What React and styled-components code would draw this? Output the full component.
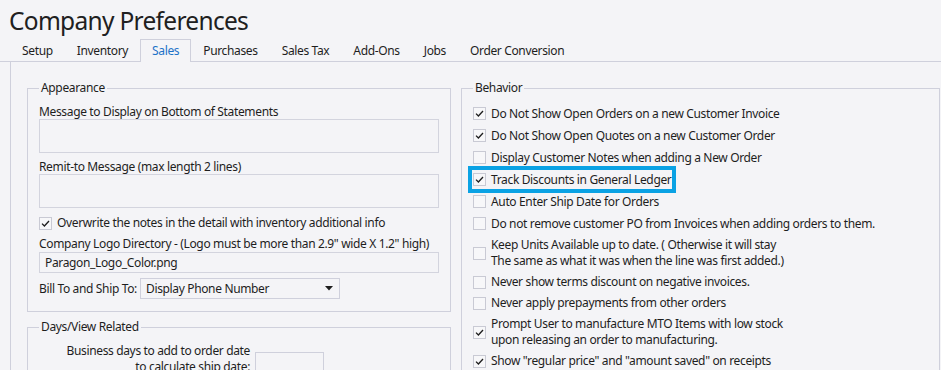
import React from "react";
import styled, { createGlobalStyle } from "styled-components";

const GlobalStyle = createGlobalStyle`
  html, body {
    margin: 0;
    padding: 0;
    background: #f4f4f7;
    overflow: hidden;
  }
  body {
    font-family: "Noto Sans", "Open Sans", sans-serif;
    font-size: 12px;
    letter-spacing: -0.35px;
    color: #1e1e1e;
  }
`;

const tabs = ["Setup", "Inventory", "Sales", "Purchases", "Sales Tax", "Add-Ons", "Jobs", "Order Conversion"];

const behavior = [
  { label: "Do Not Show Open Orders on a new Customer Invoice", checked: true, tall: true },
  { label: "Do Not Show Open Quotes on a new Customer Order", checked: true, tall: true },
  { label: "Display Customer Notes when adding a New Order", checked: false, tall: true },
  { label: "Track Discounts in General Ledger", checked: true, tall: true, marked: true },
  { label: "Auto Enter Ship Date for Orders", checked: false, tall: true },
  { label: "Do not remove customer PO from Invoices when adding orders to them.", checked: false, tall: true },
  { label: ["Keep Units Available up to date. ( Otherwise it will stay", "The same as what it was when the line was first added.)"], checked: false },
  { label: "Never show terms discount on negative invoices.", checked: false },
  { label: "Never apply prepayments from other orders", checked: false },
  { label: ["Prompt User to manufacture MTO Items with low stock", "upon releasing an order to manufacturing."], checked: true },
  { label: "Show \"regular price\" and \"amount saved\" on receipts", checked: true },
];

const Check = ({ checked }) => (
  <Box>
    {checked && (
      <svg width="13" height="13" viewBox="0 0 13 13">
        <polyline points="3,6.6 5.4,9 10,4" fill="none" stroke="#1e1e1e" strokeWidth="1.3" />
      </svg>
    )}
  </Box>
);

const App = () => {
  return (
    <Page>
      <GlobalStyle />
      <Title>Company Preferences</Title>
      <TabStrip>
        {tabs.map((t) => (
          <Tab key={t} $active={t === "Sales"}>
            {t}
          </Tab>
        ))}
      </TabStrip>
      <Panel>
        <LeftCol>
          <Group>
            <Legend>Appearance</Legend>
            <Label $top={9}>Message to Display on Bottom of Statements</Label>
            <TextBox $h={34} />
            <Label $top={7}>Remit-to Message (max length 2 lines)</Label>
            <TextBox $h={34} />
            <CheckRow $top={7}>
              <Check checked />
              <span>Overwrite the notes in the detail with inventory additional info</span>
            </CheckRow>
            <Label $top={6}>Company Logo Directory - (Logo must be more than 2.9" wide X 1.2" high)</Label>
            <TextBox $h={21} $top={1}>Paragon_Logo_Color.png</TextBox>
            <ComboRow>
              <span>Bill To and Ship To:</span>
              <Combo>
                <span>Display Phone Number</span>
                <svg width="8" height="5" viewBox="0 0 8 5">
                  <polygon points="0,0 8,0 4,4.5" fill="#1e1e1e" />
                </svg>
              </Combo>
            </ComboRow>
          </Group>
          <Group>
            <Legend>Days/View Related</Legend>
            <DaysRow>
              <DaysLabel>
                Business days to add to order date
                <br />
                to calculate ship date:
              </DaysLabel>
              <SmallBox />
            </DaysRow>
          </Group>
        </LeftCol>
        <RightCol>
          <Group>
            <Legend>Behavior</Legend>
            <List>
              {behavior.map((b, i) => (
                <Option key={i} $tall={b.tall} $marked={b.marked}>
                  <Check checked={b.checked} />
                  <span>
                    {Array.isArray(b.label) ? (
                      <>
                        {b.label[0]}
                        <br />
                        {b.label[1]}
                      </>
                    ) : (
                      b.label
                    )}
                  </span>
                </Option>
              ))}
            </List>
          </Group>
        </RightCol>
      </Panel>
    </Page>
  );
};

const Page = styled.div`
  width: 941px;
  height: 370px;
  overflow: hidden;
`;

const Title = styled.div`
  height: 39px;
  padding-left: 9px;
  font-size: 24.5px;
  letter-spacing: -0.7px;
  line-height: 42px;
  color: #202020;
  box-sizing: border-box;
`;

const TabStrip = styled.div`
  display: flex;
  padding-left: 10px;
  height: 22px;
  border-bottom: 1px solid #cfd0dc;
`;

const Tab = styled.div`
  padding: 0 11px;
  line-height: 22px;
  box-sizing: border-box;
  border: 1px solid ${(p) => (p.$active ? "#cfd0dc" : "transparent")};
  border-bottom: none;
  background: #f4f4f7;
  height: ${(p) => (p.$active ? "23px" : "22px")};
  color: ${(p) => (p.$active ? "#1c72c8" : "#1e1e1e")};
  position: relative;
`;

const Panel = styled.div`
  display: flex;
  gap: 10px;
  margin-left: 10px;
  border-left: 1px solid #cfd0dc;
  padding: 18px 0 0 16px;
  height: 400px;
`;

const LeftCol = styled.div`
  width: 424px;
  display: flex;
  flex-direction: column;
  gap: 7px;
  flex-shrink: 0;
`;

const RightCol = styled.div`
  width: 479px;
  flex-shrink: 0;
`;

const Group = styled.fieldset`
  margin: 0;
  padding: 0 11px 12px 11px;
  border: 1px solid #cfd0dc;
  min-width: 0;
  display: flex;
  flex-direction: column;
`;

const Legend = styled.legend`
  padding: 0 2px;
  line-height: 16px;
  font-size: 12px;
`;

const Label = styled.div`
  line-height: 14px;
  margin-top: ${(p) => p.$top || 0}px;
  white-space: nowrap;
`;

const TextBox = styled.div`
  height: ${(p) => p.$h}px;
  margin-top: ${(p) => p.$top || 0}px;
  border: 1px solid #d3d4de;
  box-sizing: border-box;
  padding-left: 5px;
  line-height: 19px;
`;

const Box = styled.span`
  width: 13px;
  height: 13px;
  box-sizing: border-box;
  border: 1px solid #c9cad4;
  background: #f7f7f9;
  flex-shrink: 0;
  display: flex;
  align-items: center;
  justify-content: center;
  svg {
    margin: -1px;
  }
`;

const CheckRow = styled.div`
  display: flex;
  align-items: center;
  gap: 5px;
  line-height: 16px;
  margin-top: ${(p) => p.$top || 0}px;
  white-space: nowrap;
`;

const ComboRow = styled.div`
  display: flex;
  align-items: center;
  gap: 3px;
  margin-top: 5px;
  white-space: nowrap;
`;

const Combo = styled.div`
  width: 200px;
  height: 21px;
  box-sizing: border-box;
  border: 1px solid #cfd0dc;
  display: flex;
  align-items: center;
  justify-content: space-between;
  padding: 0 6px 0 5px;
`;

const DaysRow = styled.div`
  display: flex;
  align-items: flex-start;
  gap: 5px;
  margin-top: 8px;
  height: 60px;
`;

const DaysLabel = styled.div`
  width: 211px;
  text-align: right;
  line-height: 16px;
`;

const SmallBox = styled.div`
  width: 69px;
  height: 22px;
  margin-top: 9px;
  border: 1px solid #cfd0dc;
  box-sizing: border-box;
`;

const List = styled.div`
  display: flex;
  flex-direction: column;
  align-items: flex-start;
  gap: 5px;
  padding-top: 9px;
`;

const Option = styled.div`
  display: inline-flex;
  align-items: center;
  gap: 5px;
  line-height: 16px;
  min-height: ${(p) => (p.$tall ? 17 : 16)}px;
  white-space: nowrap;
  outline: ${(p) => (p.$marked ? "4px solid #0aa2e4" : "none")};
  outline-offset: 1.5px;
`;

export default App;
